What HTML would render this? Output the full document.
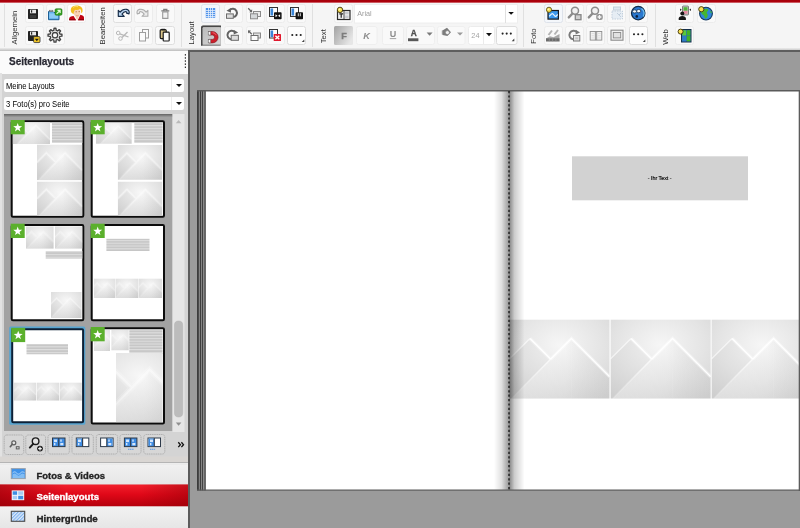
<!DOCTYPE html>
<html><head><meta charset="utf-8"><title>Fotobuch</title>
<style>
*{box-sizing:border-box;margin:0;padding:0}
html,body{width:800px;height:528px;overflow:hidden;background:#9b9b9b;font-family:"Liberation Sans",sans-serif;}
.abs{position:absolute;will-change:transform}
#topred{left:0;top:0;width:800px;height:3px;background:linear-gradient(#a6000a 0,#ad000c 62%,#e3a0a4 100%)}
#toolbar{left:0;top:3px;width:800px;height:47px;background:#f5f5f5}
#tbline{left:0;top:48px;width:800px;height:2.500px;background:linear-gradient(#ececec,#bdbdbd)}
#sidebar{left:0;top:51px;width:188px;height:477px;background:#d4d4d4}
#sbhead{left:0;top:-0.500px;width:188px;height:22.500px;background:#fbfbfb}
#sbhead span{position:absolute;left:9px;top:4.500px;font-size:10px;font-weight:bold;color:#2a2a34;letter-spacing:0;-webkit-text-stroke:0.250px #2a2a34}
.combo{position:absolute;left:4px;width:180px;height:13px;background:#fff;border-radius:2px;font-size:8.300px;line-height:15.200px;color:#000;padding-left:2px;letter-spacing:-0.100px}
.combo span{display:inline-block;transform:scaleX(0.920);transform-origin:0 50%;white-space:nowrap}
.combo:after{content:"";position:absolute;right:2.500px;top:5px;border:3px solid transparent;border-top:3.500px solid #111;border-bottom:0}
.combo:before{content:"";position:absolute;right:12px;top:0;width:1px;height:13px;background:#ececec}
#canvas{left:188px;top:50px;width:612px;height:478px;background:#9b9b9b;border-left:2.500px solid #5c5c5c;border-top:2px solid #5e5e5e}
</style></head><body>
<div id="topred" class="abs"></div>
<div id="toolbar" class="abs"></div>
<div id="tbline" class="abs"></div>
<svg class="abs" style="left:0;top:0" width="800" height="50" viewBox="0 0 800 50" font-family="Liberation Sans, sans-serif">
<defs><linearGradient id="pr" x1="0" y1="0" x2="1" y2="1"><stop offset="0" stop-color="#bcbcbc"/><stop offset="1" stop-color="#d6d6d6"/></linearGradient><linearGradient id="pr2" x1="0" y1="0" x2="1" y2="0.6"><stop offset="0" stop-color="#a2a2a2"/><stop offset="1" stop-color="#e6e6e6"/></linearGradient></defs>
<rect x="4" y="4" width="1" height="43" fill="#e0e0e0"/>
<rect x="92" y="4" width="1" height="43" fill="#e0e0e0"/>
<rect x="181" y="4" width="1" height="43" fill="#e0e0e0"/>
<rect x="312" y="4" width="1" height="43" fill="#e0e0e0"/>
<rect x="523" y="4" width="1" height="43" fill="#e0e0e0"/>
<rect x="655" y="4" width="1" height="43" fill="#e0e0e0"/>
<text transform="translate(16.9,44.5) rotate(-90)" font-size="7.700" fill="#2e2e2e">Allgemein</text>
<text transform="translate(105.2,44.5) rotate(-90)" font-size="7.700" fill="#2e2e2e">Bearbeiten</text>
<text transform="translate(193.9,44.5) rotate(-90)" font-size="7.700" fill="#2e2e2e">Layout</text>
<text transform="translate(326.1,43.3) rotate(-90)" font-size="7.700" fill="#2e2e2e">Text</text>
<text transform="translate(536.3,43.8) rotate(-90)" font-size="7.700" fill="#2e2e2e">Foto</text>
<text transform="translate(667.8,44.8) rotate(-90)" font-size="7.700" fill="#2e2e2e">Web</text>
<rect x="25.5" y="4.5" width="18" height="18" rx="2" fill="#f9f9f9" stroke="#ececec"/>
<rect x="46.5" y="4.5" width="18" height="18" rx="2" fill="#f9f9f9" stroke="#ececec"/>
<rect x="67.5" y="4.5" width="18" height="18" rx="2" fill="#f9f9f9" stroke="#ececec"/>
<rect x="25.5" y="26.5" width="18" height="18" rx="2" fill="#f9f9f9" stroke="#ececec"/>
<rect x="46.5" y="26.5" width="18" height="18" rx="2" fill="#f9f9f9" stroke="#ececec"/>
<rect x="113.5" y="4.5" width="18" height="18" rx="2" fill="#f9f9f9" stroke="#ececec"/>
<rect x="113.5" y="26.5" width="18" height="18" rx="2" fill="#f9f9f9" stroke="#ececec"/>
<rect x="134.5" y="4.5" width="18" height="18" rx="2" fill="#f9f9f9" stroke="#ececec"/>
<rect x="134.5" y="26.5" width="18" height="18" rx="2" fill="#f9f9f9" stroke="#ececec"/>
<rect x="156.5" y="4.5" width="18" height="18" rx="2" fill="#f9f9f9" stroke="#ececec"/>
<rect x="156.5" y="26.5" width="18" height="18" rx="2" fill="#f9f9f9" stroke="#ececec"/>
<rect x="201.5" y="4.5" width="18" height="18" rx="2" fill="#f9f9f9" stroke="#ececec"/>
<rect x="224.5" y="4.5" width="18" height="18" rx="2" fill="#f9f9f9" stroke="#ececec"/>
<rect x="224.5" y="26.5" width="18" height="18" rx="2" fill="#f9f9f9" stroke="#ececec"/>
<rect x="246.5" y="4.5" width="18" height="18" rx="2" fill="#f9f9f9" stroke="#ececec"/>
<rect x="246.5" y="26.5" width="18" height="18" rx="2" fill="#f9f9f9" stroke="#ececec"/>
<rect x="266.5" y="4.5" width="18" height="18" rx="2" fill="#f9f9f9" stroke="#ececec"/>
<rect x="266.5" y="26.5" width="18" height="18" rx="2" fill="#f9f9f9" stroke="#ececec"/>
<rect x="287.5" y="4.5" width="18" height="18" rx="2" fill="#f9f9f9" stroke="#ececec"/>
<rect x="287.5" y="26.5" width="18" height="18" rx="2" fill="#f9f9f9" stroke="#ececec"/>
<rect x="544.5" y="4.5" width="18" height="18" rx="2" fill="#f9f9f9" stroke="#ececec"/>
<rect x="544.5" y="26.5" width="18" height="18" rx="2" fill="#f9f9f9" stroke="#ececec"/>
<rect x="565.5" y="4.5" width="18" height="18" rx="2" fill="#f9f9f9" stroke="#ececec"/>
<rect x="565.5" y="26.5" width="18" height="18" rx="2" fill="#f9f9f9" stroke="#ececec"/>
<rect x="586.5" y="4.5" width="18" height="18" rx="2" fill="#f9f9f9" stroke="#ececec"/>
<rect x="586.5" y="26.5" width="18" height="18" rx="2" fill="#f9f9f9" stroke="#ececec"/>
<rect x="607.5" y="4.5" width="18" height="18" rx="2" fill="#f9f9f9" stroke="#ececec"/>
<rect x="607.5" y="26.5" width="18" height="18" rx="2" fill="#f9f9f9" stroke="#ececec"/>
<rect x="629.5" y="4.5" width="18" height="18" rx="2" fill="#f9f9f9" stroke="#ececec"/>
<rect x="629.5" y="26.5" width="18" height="18" rx="2" fill="#f9f9f9" stroke="#ececec"/>
<rect x="675.5" y="4.5" width="18" height="18" rx="2" fill="#f9f9f9" stroke="#ececec"/>
<rect x="697.5" y="4.5" width="18" height="18" rx="2" fill="#f9f9f9" stroke="#ececec"/>
<rect x="675.5" y="26.5" width="18" height="18" rx="2" fill="#f9f9f9" stroke="#ececec"/>
<rect x="334.5" y="4.5" width="18" height="18" rx="2" fill="#f9f9f9" stroke="#ececec"/>

<g id="i-save">
<rect x="28" y="9" width="10" height="10" rx="0.8" fill="#232323"/>
<rect x="30" y="9.7" width="6" height="3.6" fill="#e9e9e9"/>
<rect x="31" y="10.2" width="1.2" height="2.4" fill="#232323"/>
<rect x="30" y="15" width="6" height="3.2" fill="#3b3b3b"/>
</g>

<g id="i-folder">
<path d="M48.5 11.5h4.5l1 1h5v7.2h-10.5z" fill="#5fb0ea" stroke="#1d5e94" stroke-width="1"/>
<rect x="49.3" y="10.2" width="3.6" height="1.5" fill="#d9d9e6" stroke="#555" stroke-width="0.5"/>
<rect x="49.3" y="13.4" width="8.8" height="4.8" fill="#8ccbf5"/>
<rect x="55" y="8.8" width="7" height="6.4" rx="1.2" fill="#38a624" stroke="#1d6b12" stroke-width="0.6"/>
<path d="M56.6 13.8l3.2-3.2m-2.3-.3h2.6v2.6" stroke="#e8ffe0" stroke-width="1.2" fill="none"/>
</g>

<g id="i-user">
<rect x="67.500" y="4.500" width="18" height="18" rx="2" fill="#fefefe" stroke="#ececec"/>
<path d="M74.600 14.500l2.500 5.700 2.800-5.700z" fill="#f8cfb0"/>
<path d="M69.200 20.200v-2c0-1.300 1.800-1.900 4.400-2.300l2.600 4.300zM84 20.200v-2.800c0-1.400-1.600-2.200-3.600-2.600l-2.600 5.400z" fill="#c00312"/>
<path d="M69.200 20.200v-1.200h5.800l.8 1.200zM84 20.200v-1.300h-5.200l-.6 1.300z" fill="#8e000a"/>
<ellipse cx="77" cy="12.300" rx="3.300" ry="4.200" fill="#f9d2b4"/>
<path d="M71.400 12.400c-1.600-3.600.4-6.800 5-6.800 4.400 0 7 2.400 6 6.400l-1.200 1.600c.2-2-.2-3.600-1.200-4.600-1.600 1-3.400 1.200-4.800.8-1 1-1.400 2.400-1.600 4.400z" fill="#f3bd1e"/>
<path d="M73 7.500c1.400-1.200 3.400-1.400 5-.8" stroke="#fbe27a" stroke-width="0.900" fill="none"/>
<path d="M75.600 11.800h1.200M78.600 11.600h1.200" stroke="#a55a2a" stroke-width="0.800"/>
<path d="M75.800 15.300c.8.600 2 .6 2.800 0" stroke="#d98a66" stroke-width="0.700" fill="none"/>
</g>

<g id="i-saveas">
<rect x="28" y="31" width="10" height="10" rx="0.8" fill="#232323"/>
<rect x="30" y="31.700" width="6" height="3.600" fill="#e9e9e9"/>
<rect x="31" y="32.200" width="1.200" height="2.400" fill="#232323"/>
<rect x="33.600" y="36.600" width="6.400" height="6" rx="1" fill="#f0c62a" stroke="#2a2a2a" stroke-width="0.8"/>
<path d="M34.800 38.800h4l-2 2.400z" fill="#1b1b1b"/>
</g>

<g id="i-gear"><path d="M59.86 34.03 L61.94 34.27 L61.94 36.13 L59.86 36.37 L59.26 37.81 L60.56 39.45 L59.25 40.76 L57.61 39.46 L56.17 40.06 L55.93 42.14 L54.07 42.14 L53.83 40.06 L52.39 39.46 L50.75 40.76 L49.44 39.45 L50.74 37.81 L50.14 36.37 L48.06 36.13 L48.06 34.27 L50.14 34.03 L50.74 32.59 L49.44 30.95 L50.75 29.64 L52.39 30.94 L53.83 30.34 L54.07 28.26 L55.93 28.26 L56.17 30.34 L57.61 30.94 L59.25 29.64 L60.56 30.95 L59.26 32.59Z" fill="#fdfdfd" stroke="#434343" stroke-width="1.400" stroke-linejoin="round"/><circle cx="55" cy="35.2" r="2.700" fill="#fbfbfb" stroke="#434343" stroke-width="1.300"/></g>

<g id="i-undo">
<rect x="113.500" y="4.500" width="18" height="18" rx="2" fill="#f9f9f9" stroke="#dedede"/>
<path d="M118.300 16.300V10.400L120.100 12.200C121.500 10.200 124 8.800 126.800 9.400C129 9.900 129.600 11.800 129 13.900L126.600 13.200C127 12.200 126.600 11.600 125.600 11.600C124.200 11.600 122.900 12.800 122 14.100L124.200 16.300Z" fill="#b9d5f1" stroke="#172d49" stroke-width="1.200" stroke-linejoin="round"/>
</g>

<g id="i-redo">
<path d="M147.9 16.3 V10.4 L146.1 12.2 C144.7 10.2 142.2 8.8 139.4 9.4 C137.2 9.9 136.6 11.8 137.2 13.9 L139.6 13.2 C139.2 12.2 139.6 11.6 140.6 11.6 C142.0 11.6 143.3 12.8 144.2 14.1 L142.0 16.3 Z" fill="#ebebeb" stroke="#adadad" stroke-width="1.100" stroke-linejoin="round"/>
</g>

<g id="i-trash" stroke="#9a9a9a" fill="none" stroke-width="1.100">
<path d="M162.700 12h5.200v6.400h-5.200z" fill="#f3f3f3"/>
<path d="M161.300 10.800h8M163.800 10.600v-1.300h3v1.300" stroke="#7f7f7f" stroke-width="1.300"/>
</g>

<g id="i-cut" stroke="#b8b8b8" fill="none" stroke-width="1">
<circle cx="118.200" cy="33" r="1.800"/><circle cx="120.500" cy="38.500" r="1.800"/>
<path d="M119.800 33.800l8.700 3.200M122 37.500l5.500-5.500" stroke-width="1.300"/>
</g>

<g id="i-copy" stroke="#9d9d9d" fill="#fafafa" stroke-width="1">
<rect x="142.500" y="29.500" width="6" height="8.500"/>
<rect x="139.500" y="32.500" width="6" height="8.500"/>
</g>

<g id="i-paste" stroke-width="1.200">
<rect x="155.500" y="26.500" width="19" height="18" rx="2" fill="#fafafa" stroke="#dedede" stroke-width="1"/>
<rect x="160.200" y="29.600" width="6" height="9" rx="1" fill="#d9c48a" stroke="#1b1b1b"/>
<rect x="161.400" y="28.800" width="3.600" height="1.600" fill="#1b1b1b" stroke="none"/>
<rect x="163.200" y="32.200" width="6" height="8.800" rx="0.800" fill="#fdfdfd" stroke="#1b1b1b"/>
</g>

<g id="i-grid">
<rect x="201.500" y="4.500" width="18" height="18" rx="2" fill="#f3f6fb" stroke="#dfe3ea"/>
<rect x="205.800" y="8" width="9.400" height="9.800" fill="#4f92ea"/>
<g fill="#e2edfc"><rect x="208" y="8" width="0.800" height="9.800"/><rect x="210.100" y="8" width="0.800" height="9.800"/><rect x="212.200" y="8" width="0.800" height="9.800"/>
<rect x="205.800" y="10" width="9.400" height="0.800"/><rect x="205.800" y="12" width="9.400" height="0.800"/><rect x="205.800" y="14" width="9.400" height="0.800"/><rect x="205.800" y="16" width="9.400" height="0.800"/></g>
</g>

<g id="i-magnet">
<rect x="201" y="25.600" width="20" height="20.200" rx="2" fill="#bdbdbd"/>
<path d="M201 45.800v-18.200a2 2 0 0 1 2-2h18v1.700h-17.300a1 1 0 0 0-1 1v17.500z" fill="#474747"/>
<rect x="202.700" y="27.300" width="17.500" height="17.300" rx="1" fill="url(#pr)"/>
<rect x="202.700" y="44.600" width="18" height="1.200" fill="#8c8c8c"/>
<path d="M209.200 31.500h3.200a5.700 5.700 0 0 1 0 11.400h-3.200v-3.500h3.200a2.200 2.200 0 0 0 0-4.400h-3.200z" fill="#cc1f2a" stroke="#7d1119" stroke-width="0.600"/>
<path d="M212.600 32.600a4.600 4.600 0 0 1 3.800 2.600" fill="none" stroke="#ec6a70" stroke-width="0.900"/>
<rect x="208.200" y="31.500" width="2.500" height="3.500" fill="#f6f6f6" stroke="#555" stroke-width="0.500"/>
<rect x="208.200" y="39.400" width="2.500" height="3.500" fill="#f6f6f6" stroke="#555" stroke-width="0.500"/>
</g>

<g id="i-rotl" fill="none" stroke="#626262">
<path d="M229.600 10.200A4.200 4.200 0 1 1 233.400 17.100" stroke-width="2"/>
<path d="M226.500 10.700l4.300-2.700.2 4.700z" fill="#626262" stroke="none"/>
<rect x="226.500" y="13.900" width="6.800" height="4.400" fill="#dcdcdc" stroke="#6a6a6a" stroke-width="1"/>
</g>

<g id="i-rotr" fill="none" stroke="#626262">
<path d="M235 32.300A4.300 4.300 0 1 0 231.600 39.400" stroke-width="2"/>
<path d="M238.200 32.600l-4.300-2.700-.2 4.700z" fill="#626262" stroke="none"/>
<rect x="231.200" y="35.300" width="7.200" height="5" fill="#dcdcdc" stroke="#6a6a6a" stroke-width="1"/>
</g>

<g id="i-back" stroke="#8a8a8a" fill="none" stroke-width="1">
<rect x="253.500" y="11.500" width="7" height="5" fill="#eaeaea"/>
<rect x="250.500" y="13.800" width="7" height="5" fill="#d5d8da"/>
<path d="M248.200 8.300l3.400 3.400" stroke="#666" stroke-width="1.300"/>
<path d="M249.200 12.200h2.900v-2.900z" fill="#666" stroke="none"/>
</g>

<g id="i-fwd" stroke="#8a8a8a" fill="none" stroke-width="1">
<rect x="253.500" y="33" width="7" height="5" fill="#e2e2e2"/>
<rect x="251" y="35.500" width="7" height="5" fill="#fdfdfd" stroke="#6d6d6d"/>
<path d="M251.800 34.200l-3.400-3.400" stroke="#666" stroke-width="1.300"/>
<path d="M248 33.400v-3h3z" fill="#666" stroke="none"/>
</g>

<g id="i-pg1">
<rect x="269.500" y="7.500" width="8" height="9" fill="#fdfdfd" stroke="#333" stroke-width="1"/>
<rect x="270.500" y="8.500" width="2.600" height="7" fill="#3a86d8"/>
<rect x="274" y="12.300" width="7.600" height="7" rx="0.800" fill="#111"/>
<path d="M275.500 14.300l2 1.500-2 1.500zM280.100 14.300l-2 1.500 2 1.500z" fill="#fff"/>
</g>

<g id="i-pg2">
<rect x="290.500" y="7.500" width="8" height="9" fill="#fdfdfd" stroke="#333" stroke-width="1"/>
<rect x="291.500" y="8.500" width="2.600" height="7" fill="#3a86d8"/>
<rect x="295.600" y="12.300" width="7.400" height="7" rx="0.800" fill="#111"/>
<path d="M297.800 13.300h1v3h-1zM299.800 13.300h1v3h-1z" fill="#ddd"/>
</g>

<g id="i-pgx">
<rect x="269.500" y="29.500" width="8" height="8.500" fill="#fdfdfd" stroke="#333" stroke-width="1"/>
<rect x="270.500" y="30.500" width="2.600" height="6.500" fill="#3a86d8"/>
<rect x="273.700" y="34" width="7.300" height="7" rx="0.600" fill="#e0182d"/>
<path d="M275.400 35.700l3.900 3.600m0-3.600l-3.900 3.600" stroke="#fff" stroke-width="1.400"/>
</g>

<g id="i-more1">
<rect x="287.500" y="26.500" width="18" height="18" rx="2" fill="#fdfdfd" stroke="#dcdcdc"/>
<circle cx="292.300" cy="35" r="1.050" fill="#222"/><circle cx="296.500" cy="35" r="1.050" fill="#222"/><circle cx="300.700" cy="35" r="1.050" fill="#222"/>
<path d="M304.300 39.500v2.600h-2.600z" fill="#444"/>
</g>

<g id="i-tbox">
<rect x="337.500" y="10.500" width="12.500" height="9" fill="#f1f1f1" stroke="#2a2a2a" stroke-width="1.200"/>
<rect x="344.800" y="12" width="3.800" height="2.300" fill="#c9ccd2"/><rect x="344.800" y="15.500" width="3.800" height="2.500" fill="#c9ccd2"/>
<path d="M344 11v8" stroke="#2a2a2a" stroke-width="0.800"/>
<path d="M339.300 13.300h3.800v1.200h-1.300v3.300h-1.200v-3.300h-1.300z" fill="#222"/>
<circle cx="340" cy="9.900" r="2.700" fill="#f7df52" stroke="#3e3208" stroke-width="0.900"/><circle cx="339.500" cy="9.400" r="0.900" fill="#fdf6c0"/>
</g>

<g id="i-font">
<rect x="354.500" y="4.500" width="163" height="18.500" fill="#ffffff" stroke="#eeeeee"/>
<path d="M505.500 5v18" stroke="#e0e0e0"/>
<text x="357.300" y="16.200" font-size="7.200" fill="#9e9e9e">Arial</text>
<path d="M508.300 12h5.600l-2.800 2.800z" fill="#111"/>
</g>

<g id="i-F">
<rect x="334" y="26" width="19" height="19" rx="1.500" fill="url(#pr2)"/>
<text x="344" y="39" font-size="9.200" font-weight="bold" fill="#7d7d7d" stroke="#7d7d7d" stroke-width="0.300" text-anchor="middle">F</text>
</g>
<g id="i-K">
<rect x="356.500" y="26.500" width="20.500" height="18" rx="2" fill="#f9f9f9" stroke="#eeeeee"/>
<text x="366.600" y="38.500" font-size="9.300" font-weight="bold" font-style="italic" fill="#8d8d8d" text-anchor="middle">K</text>
</g>
<g id="i-U">
<rect x="382.500" y="26.500" width="21" height="18" rx="2" fill="#f9f9f9" stroke="#eeeeee"/>
<text x="393" y="37.300" font-size="9" font-weight="bold" fill="#8d8d8d" text-anchor="middle">U</text>
<path d="M389.800 38.600h6.400" stroke="#8d8d8d" stroke-width="0.800"/>
</g>
<g id="i-A">
<rect x="406.500" y="26.500" width="28" height="18" rx="2" fill="#f9f9f9" stroke="#efefef"/>
<text x="413.800" y="35.600" font-size="8.300" font-weight="bold" fill="#505050" stroke="#505050" stroke-width="0.350" text-anchor="middle">A</text>
<rect x="408" y="38.300" width="10.400" height="2.900" fill="#585858"/>
<path d="M426.600 32.500h6l-3 3.200z" fill="#7a7a7a"/>
</g>
<g id="i-fill">
<rect x="437.500" y="26.500" width="27.500" height="18" rx="2" fill="#f9f9f9" stroke="#efefef"/>
<path d="M442.500 30.500l4.500-2.800 4 4.600-3.600 3.800-4.900-1.200z" fill="#7c7c7c"/>
<circle cx="447.400" cy="32.600" r="2" fill="#f2f2f2" stroke="#777" stroke-width="0.600"/>
<path d="M442.400 30.600v3.800" stroke="#9a9a9a" stroke-width="1.200"/>
<path d="M457 32.400h6l-3 3.200z" fill="#9a9a9a"/>
</g>
<g id="i-size">
<rect x="468.500" y="26.500" width="26" height="18" rx="2" fill="#ffffff" stroke="#ececec"/>
<path d="M483.500 27v17" stroke="#ebebeb"/>
<text x="471.300" y="38" font-size="7.400" fill="#a4a4a4">24</text>
<path d="M486 33h6l-3 3.200z" fill="#111"/>
</g>
<g id="i-more2">
<rect x="496.500" y="26.500" width="20.500" height="18" rx="2" fill="#fdfdfd" stroke="#dcdcdc"/>
<circle cx="502.600" cy="33.600" r="1.050" fill="#222"/><circle cx="506.700" cy="33.600" r="1.050" fill="#222"/><circle cx="510.800" cy="33.600" r="1.050" fill="#222"/>
<path d="M514.300 38.600v2.600h-2.600z" fill="#444"/>
</g>

<g id="i-photo">
<rect x="544.500" y="4.500" width="18" height="18" rx="2" fill="#f4f7fb" stroke="#dde2ea"/>
<rect x="548" y="10.500" width="10.400" height="8.600" fill="#3b97ec" stroke="#15171c" stroke-width="1.200"/>
<path d="M549 16.200c1.300-.2 2-2.600 3.300-2.600s1.900 2.800 3.200 2.800 1.400-1.600 2.300-1.800" fill="none" stroke="#e9f4fe" stroke-width="1.200"/>
<circle cx="549" cy="9.800" r="2.600" fill="#f7df52" stroke="#4a3c0a" stroke-width="0.800"/>
<circle cx="548.500" cy="9.300" r="0.900" fill="#fdf6c0"/>
</g>

<g id="i-mag1" fill="none" stroke="#8c8c8c">
<circle cx="575" cy="10.800" r="3.500" stroke-width="1.500" fill="#f1f1f1"/>
<path d="M572.300 13.700l-3.500 3.700" stroke-width="2.400" stroke-linecap="round"/>
<rect x="575.300" y="14.700" width="5.700" height="5" fill="#cfcfcf" stroke="#858585" stroke-width="1.300"/>
</g>

<g id="i-mag2" fill="none" stroke="#8c8c8c">
<circle cx="595" cy="10.800" r="3.500" stroke-width="1.500" fill="#f1f1f1"/>
<path d="M592.300 13.700l-3.500 3.700" stroke-width="2.400" stroke-linecap="round"/>
<rect x="596.200" y="13.900" width="6.600" height="6.200" rx="2" fill="#969696" stroke="none"/>
<path d="M597.600 17h3.800M599.500 15.100v3.800" stroke="#f6f6f6" stroke-width="1.300"/>
</g>

<g id="i-crop" stroke="#c2cfdc" fill="none" stroke-width="1">
<rect x="612" y="11" width="10.500" height="8" fill="#e6edf4" stroke-dasharray="1.500 1"/>
<rect x="613.500" y="7" width="7" height="3" fill="#dfe7ef"/>
<path d="M617 13l4 4m0-4l-2 2" />
</g>

<g id="i-smile">
<circle cx="638.200" cy="13.100" r="6.700" fill="#2b78cf" stroke="#102a48" stroke-width="1.300"/>
<path d="M641.500 8.500a6 6 0 0 1 1.800 8" stroke="#6fc0f0" stroke-width="1.300" fill="none"/>
<ellipse cx="634.600" cy="11.400" rx="2.100" ry="1.600" fill="#f4f8fc" stroke="#102a48" stroke-width="0.700"/>
<ellipse cx="638.700" cy="11.100" rx="2.100" ry="1.600" fill="#f4f8fc" stroke="#102a48" stroke-width="0.700"/>
<circle cx="636.800" cy="16.400" r="1.300" fill="#0c1f3a"/>
</g>

<g id="i-hist">
<path d="M546 38.500l4-2.200 3.500 1 6-3.300v4.500z" fill="#a8a8a8"/>
<rect x="546" y="38.200" width="13.600" height="3.300" fill="#6c6c6c"/>
<path d="M549.300 38.200v3.300M552.600 38.200v3.300M555.900 38.200v3.300" stroke="#9c9c9c" stroke-width="0.600"/>
<path d="M548.500 35l3.500-4.500M554.500 34.500l3.500-4.500" stroke="#b4b4b4" stroke-width="2"/>
</g>

<g id="i-rotp" fill="none" stroke="#7a7a7a">
<path d="M577 32.300A4.300 4.300 0 1 0 573.200 39.300" stroke-width="1.900"/>
<path d="M580 32.400l-4.200-2.600-.2 4.600z" fill="#7a7a7a" stroke="none"/>
<rect x="573.500" y="35.500" width="6.300" height="5.500" fill="#e4e4e4" stroke-width="1"/>
<rect x="575.300" y="37.300" width="2.800" height="2" fill="#c4c4c4" stroke="none"/>
</g>

<g id="i-cols" fill="#f2f2f2" stroke="#8c8c8c" stroke-width="0.900">
<rect x="590.200" y="31.500" width="11.600" height="8.600"/>
<path d="M595.400 31.500v8.600M596.700 31.500v8.600"/>
<path d="M591.500 33.500h2.700M591.500 35.700h2.700M591.500 37.900h2.700M598 33.500h2.700M598 35.700h2.700M598 37.900h2.700" stroke="#d4d4d4" stroke-width="0.600"/>
</g>

<g id="i-frame" fill="none" stroke="#8a8a8a">
<rect x="611" y="30.200" width="12" height="10" fill="#f2f2f2" stroke-width="1.100"/>
<rect x="613.300" y="32.500" width="7.400" height="5.400" fill="#e2e2e2" stroke-width="0.900"/>
</g>
<g id="i-more3">
<rect x="629.500" y="26.500" width="18" height="18" rx="2" fill="#fdfdfd" stroke="#dcdcdc"/>
<circle cx="634" cy="34.300" r="1.050" fill="#222"/><circle cx="638.200" cy="34.300" r="1.050" fill="#222"/><circle cx="642.400" cy="34.300" r="1.050" fill="#222"/>
<path d="M645.300 39.500v2.500h-2.500z" fill="#444"/>
</g>

<g id="i-person">
<rect x="682.500" y="6" width="6" height="9" rx="0.800" fill="#c9c9c9" stroke="#555" stroke-width="0.700"/>
<rect x="683.500" y="7.200" width="4" height="3.600" fill="#4fb63a"/>
<rect x="683.500" y="10.800" width="4" height="3" fill="#e58aa0"/>
<path d="M680 8.500l1.800 1.200-1.800 1.200zM691 8.500l-1.800 1.200 1.800 1.200z" fill="#333"/>
<circle cx="682.300" cy="13.600" r="2" fill="#151515"/>
<path d="M678.700 20v-1.500c0-1.700 1.600-2.600 3.600-2.600s3.600.9 3.600 2.600v1.500z" fill="#151515"/>
</g>

<g id="i-globe">
<circle cx="706" cy="13.600" r="6.400" fill="#2f86d8" stroke="#143a60" stroke-width="1.100"/>
<path d="M703 9.200c2-.8 4.500-.8 5.200.4.600 1.200-1 1.600-1.400 2.800-.4 1.200 1.400 1.600 1 3-.4 1.600-1.600 3-2.600 3.200-.8-.8-.4-2.200-1.200-3.200-.8-1-2.200-.8-2.600-2.200-.4-1.400.4-3.200 1.600-4z" fill="#45b52f"/>
<path d="M710.500 10.500c.9.500 1.400 1.700 1.200 2.900l-1.400-.8z" fill="#45b52f"/>
<circle cx="701.300" cy="9.200" r="2.600" fill="#f7df52" stroke="#3e3208" stroke-width="0.900"/>
</g>

<g id="i-sq">
<rect x="681.500" y="29.500" width="9.500" height="12.500" fill="#2c6fb6" stroke="#152f4a" stroke-width="1"/>
<rect x="682.300" y="30.300" width="3.800" height="5.200" fill="#58c93a"/>
<rect x="686.700" y="30.300" width="3.700" height="5.200" fill="#3fb324"/>
<rect x="682.300" y="36.100" width="3.800" height="5.200" fill="#2f7cc7"/>
<rect x="686.700" y="36.100" width="3.700" height="5.200" fill="#3fb324"/>
<circle cx="680.600" cy="31.600" r="2.500" fill="#f7df52" stroke="#3e3208" stroke-width="0.900"/>
</g>

</svg>
<div id="canvas" class="abs"></div>
<svg class="abs" style="left:188px;top:50px" width="612" height="478" viewBox="188 50 612 478" font-family="Liberation Sans, sans-serif">
<defs>
<radialGradient id="phgc" cx="0.5" cy="0.32" r="0.8"><stop offset="0" stop-color="#f6f6f6"/><stop offset="0.55" stop-color="#e4e4e4"/><stop offset="1" stop-color="#d3d3d3"/></radialGradient>
<linearGradient id="m2gc" x1="0" y1="0" x2="1" y2="0"><stop offset="0" stop-color="#ffffff" stop-opacity="0.28"/><stop offset="0.55" stop-color="#ffffff" stop-opacity="0.06"/><stop offset="1" stop-color="#000000" stop-opacity="0.03"/></linearGradient>
<linearGradient id="lnfc" gradientUnits="userSpaceOnUse" x1="41.500" y1="40" x2="2" y2="80"><stop offset="0" stop-color="#fff" stop-opacity="0.700"/><stop offset="0.5" stop-color="#fff" stop-opacity="0.350"/><stop offset="1" stop-color="#fff" stop-opacity="0.100"/></linearGradient>
<symbol id="phc" viewBox="0 0 101 80" preserveAspectRatio="none">
<rect width="101" height="80" fill="url(#phgc)"/>
<path d="M0 40L20.800 19.300 41.500 40 2 80H0z" fill="#000" fill-opacity="0.02"/>
<path d="M2 80L62.500 19.300 101 57.800V80z" fill="url(#m2gc)"/>
<path d="M20.800 19.300L41.500 40M41.500 40.300L62.500 19.300 101 57.800" fill="none" stroke="#fff" stroke-opacity="0.350" stroke-width="3.600"/>
<path d="M20.800 19.300L41.500 40M41.500 40.300L62.500 19.300 101 57.800" fill="none" stroke="#fff" stroke-opacity="0.950" stroke-width="1.400"/>
<path d="M0 40L20.800 19.300" fill="none" stroke="#fff" stroke-opacity="0.600" stroke-width="1.400"/>
<path d="M2 80L41.500 40.300" fill="none" stroke="url(#lnfc)" stroke-width="1.500"/>
<path d="M62.500 19.300V80" stroke="#fff" stroke-opacity="0.100" stroke-width="0.800"/>
</symbol>
<linearGradient id="shl" x1="0" y1="0" x2="1" y2="0"><stop offset="0" stop-color="#000" stop-opacity="0"/><stop offset="0.5" stop-color="#000" stop-opacity="0.12"/><stop offset="1" stop-color="#000" stop-opacity="0.40"/></linearGradient>
<linearGradient id="shr" x1="0" y1="0" x2="1" y2="0"><stop offset="0" stop-color="#000" stop-opacity="0.50"/><stop offset="0.35" stop-color="#000" stop-opacity="0.20"/><stop offset="1" stop-color="#000" stop-opacity="0"/></linearGradient>
</defs>
<rect x="197" y="90" width="610" height="400.500" fill="#ffffff"/>
<rect x="197" y="90.500" width="1" height="400" fill="#3c3c3c"/>
<rect x="198" y="90.500" width="1" height="400" fill="#4a4a4a"/>
<rect x="199" y="90.500" width="1" height="400" fill="#828282"/>
<rect x="200" y="90.500" width="1" height="400" fill="#3e3e3e"/>
<rect x="201" y="90.500" width="1" height="400" fill="#858585"/>
<rect x="202" y="90.500" width="1" height="400" fill="#424242"/>
<rect x="203" y="90.500" width="1" height="400" fill="#8a8a8a"/>
<rect x="204" y="90.500" width="1" height="400" fill="#646464"/>
<rect x="205" y="90.500" width="1" height="400" fill="#6a6a6a"/>
<use href="#phc" x="509.3" y="319.400" width="100.400" height="79.300"/>
<use href="#phc" x="610.4" y="319.400" width="100.400" height="79.300"/>
<use href="#phc" x="711.4" y="319.400" width="100.400" height="79.300"/>
<rect x="572" y="156.300" width="176" height="44" fill="#d2d2d2"/>
<text x="659.700" y="180.200" font-size="5.300" text-anchor="middle" fill="#000" stroke="#000" stroke-width="0.150">- Ihr Text -</text>
<rect x="494" y="91" width="15" height="399" fill="url(#shl)"/>
<rect x="509" y="91" width="15.500" height="399" fill="url(#shr)"/>
<rect x="197" y="90" width="610" height="1.500" fill="#5a5a5a"/>
<rect x="197" y="489.500" width="610" height="1.300" fill="#5a5a5a"/>
<rect x="798.700" y="90" width="1.300" height="401" fill="#5c5c5c"/>
<path d="M509 91V491" stroke="#0a0a0a" stroke-width="1.250" stroke-dasharray="2.200 2.200"/>
</svg>
<div id="sidebar" class="abs">
  <div id="sbhead" class="abs"><span>Seitenlayouts</span></div>
  <div class="abs" style="left:0;top:22px;width:2px;height:390px;background:#e2e2e2"></div>
  <div class="combo" style="top:28px"><span>Meine Layouts</span></div>
  <div class="combo" style="top:46px"><span style="letter-spacing:0.020px">3 Foto(s) pro Seite</span></div>
<svg class="abs" style="left:0;top:-51px" width="188" height="528" viewBox="0 0 188 528" font-family="Liberation Sans, sans-serif">
<defs>
<radialGradient id="phg" cx="0.5" cy="0.32" r="0.8"><stop offset="0" stop-color="#f7f7f7"/><stop offset="0.55" stop-color="#e3e3e3"/><stop offset="1" stop-color="#d2d2d2"/></radialGradient>
<linearGradient id="m2g" x1="0" y1="0" x2="1" y2="0"><stop offset="0" stop-color="#ffffff" stop-opacity="0.25"/><stop offset="0.55" stop-color="#ffffff" stop-opacity="0.05"/><stop offset="1" stop-color="#000000" stop-opacity="0.04"/></linearGradient>
<linearGradient id="lnf" gradientUnits="userSpaceOnUse" x1="0" y1="19" x2="0" y2="80"><stop offset="0" stop-color="#fff" stop-opacity="1"/><stop offset="0.45" stop-color="#fff" stop-opacity="0.800"/><stop offset="1" stop-color="#fff" stop-opacity="0.100"/></linearGradient>
<symbol id="ph" viewBox="0 0 101 80" preserveAspectRatio="xMidYMid slice">
<rect width="101" height="80" fill="url(#phg)"/>
<path d="M0 40L20.800 19.300 41.500 40 2 80H0z" fill="#000" fill-opacity="0.025"/>
<path d="M2 80L62.500 19.300 101 57.800V80z" fill="url(#m2g)"/>
<path d="M0 40L20.800 19.300 41.500 40M2 80L62.500 19.300 101 57.800" fill="none" stroke="url(#lnf)" stroke-opacity="0.220" stroke-width="7"/>
<path d="M0 40L20.800 19.300 41.500 40M2 80L62.500 19.300 101 57.800" fill="none" stroke="url(#lnf)" stroke-opacity="0.450" stroke-width="2.800"/>
</symbol>
<symbol id="phs" viewBox="0 0 101 80" preserveAspectRatio="xMidYMid slice">
<rect width="101" height="80" fill="url(#phg)"/>
<path d="M2 80L62.500 19.300 101 57.800V80z" fill="url(#m2g)"/>
<path d="M0 40L20.800 19.300 41.500 40M2 80L62.500 19.300 101 57.800" fill="none" stroke="url(#lnf)" stroke-opacity="0.220" stroke-width="9"/>
<path d="M0 40L20.800 19.300 41.500 40M2 80L62.500 19.300 101 57.800" fill="none" stroke="url(#lnf)" stroke-opacity="0.250" stroke-width="3.500"/>
</symbol>
<pattern id="stripes" width="4" height="2.800" patternUnits="userSpaceOnUse"><rect width="4" height="2.800" fill="#dedede"/><rect width="4" height="1.500" y="0.300" fill="#c4c4c4"/></pattern>
<linearGradient id="tsh" x1="0" y1="0" x2="0" y2="1"><stop offset="0" stop-color="#6e6e6e"/><stop offset="1" stop-color="#a2a2a2"/></linearGradient>
</defs>
<rect x="4" y="114" width="168.500" height="317" fill="#a2a2a2"/>
<rect x="4" y="114" width="168.500" height="1" fill="#6c6c6c"/><rect x="4" y="115" width="168.500" height="1" fill="#808080"/><rect x="4" y="116" width="168.500" height="1" fill="#949494"/>
<rect x="172.500" y="114" width="12" height="318" fill="#e6e6e6"/>
<rect x="174.500" y="321" width="8.200" height="96" rx="4.100" fill="#bcbcbc" stroke="#b0b0b0" stroke-width="0.500"/>
<path d="M175.800 123.200h5.600l-2.800-3.200z" fill="#b9b9b9"/>
<path d="M175.800 422.500h5.600l-2.800 3.200z" fill="#8f8f8f"/>
<rect x="11.7" y="121.3" width="71.6" height="95.4" rx="1.200" fill="#ffffff" stroke="#0c0c0c" stroke-width="2"/><use href="#ph" x="12.7" y="122.3" width="37.3" height="21.7"/><rect x="52.0" y="123.0" width="30.3" height="20.0" fill="url(#stripes)"/><use href="#ph" x="37.0" y="144.6" width="45.3" height="35.7"/><use href="#ph" x="37.0" y="181.8" width="45.3" height="33.9"/><rect x="10.7" y="120.0" width="14" height="14.300" fill="#5bb02c"/><polygon points="17.70,122.90 18.82,126.06 22.17,126.15 19.51,128.19 20.46,131.40 17.70,129.50 14.94,131.40 15.89,128.19 13.23,126.15 16.58,126.06" fill="#fff"/>
<rect x="91.7" y="121.3" width="72.3" height="95.4" rx="1.200" fill="#ffffff" stroke="#0c0c0c" stroke-width="2"/><use href="#ph" x="96.0" y="123.0" width="35.8" height="20.7"/><rect x="134.3" y="123.0" width="28.3" height="20.0" fill="url(#stripes)"/><use href="#ph" x="117.7" y="145.0" width="44.6" height="34.7"/><use href="#ph" x="117.7" y="181.8" width="44.6" height="33.9"/><rect x="90.7" y="120.0" width="14" height="14.300" fill="#5bb02c"/><polygon points="97.70,122.90 98.82,126.06 102.17,126.15 99.51,128.19 100.46,131.40 97.70,129.50 94.94,131.40 95.89,128.19 93.23,126.15 96.58,126.06" fill="#fff"/>
<rect x="11.7" y="225" width="71.6" height="95.3" rx="1.200" fill="#ffffff" stroke="#0c0c0c" stroke-width="2"/><use href="#phs" x="26.0" y="226.3" width="27.6" height="22.5"/><use href="#phs" x="55.0" y="226.3" width="27.3" height="22.5"/><rect x="45.7" y="251.0" width="36.6" height="7.6" fill="url(#stripes)"/><use href="#ph" x="51.0" y="292.0" width="30.5" height="26.0"/><rect x="10.7" y="223.7" width="14" height="14.300" fill="#5bb02c"/><polygon points="17.70,226.60 18.82,229.76 22.17,229.85 19.51,231.89 20.46,235.10 17.70,233.20 14.94,235.10 15.89,231.89 13.23,229.85 16.58,229.76" fill="#fff"/>
<rect x="91.7" y="225" width="72.3" height="95.3" rx="1.200" fill="#ffffff" stroke="#0c0c0c" stroke-width="2"/><rect x="106.4" y="238.8" width="43.1" height="12.2" fill="url(#stripes)"/><use href="#phs" x="94.0" y="278.4" width="21.0" height="19.6"/><use href="#phs" x="115.5" y="278.4" width="22.5" height="19.6"/><use href="#phs" x="138.5" y="278.4" width="23.5" height="19.6"/><rect x="90.7" y="223.7" width="14" height="14.300" fill="#5bb02c"/><polygon points="97.70,226.60 98.82,229.76 102.17,229.85 99.51,231.89 100.46,235.10 97.70,233.20 94.94,235.10 95.89,231.89 93.23,229.85 96.58,229.76" fill="#fff"/>
<rect x="9.200" y="326.500" width="76.100" height="98.300" rx="1.500" fill="#58a6d2"/><rect x="12.200" y="329.300" width="70.900" height="92.900" rx="1" fill="#ffffff" stroke="#0d2036" stroke-width="2"/><rect x="26.5" y="344.0" width="41.5" height="10.3" fill="url(#stripes)"/><use href="#phs" x="14.0" y="382.4" width="22.3" height="18.3"/><use href="#phs" x="36.8" y="382.4" width="22.4" height="18.3"/><use href="#phs" x="59.7" y="382.4" width="22.1" height="18.3"/><rect x="11.2" y="327.8" width="14" height="14.300" fill="#5bb02c"/><polygon points="18.20,330.70 19.32,333.86 22.67,333.95 20.01,335.99 20.96,339.20 18.20,337.30 15.44,339.20 16.39,335.99 13.73,333.95 17.08,333.86" fill="#fff"/>
<rect x="91.7" y="328.3" width="72.3" height="95.2" rx="1.200" fill="#ffffff" stroke="#0c0c0c" stroke-width="2"/><use href="#phs" x="94.0" y="330.0" width="16.0" height="21.0"/><use href="#phs" x="111.4" y="330.0" width="17.3" height="20.5"/><rect x="129.3" y="330.0" width="33.2" height="24.0" fill="url(#stripes)"/><use href="#ph" x="116.0" y="353.0" width="46.5" height="69.3"/><rect x="90.7" y="327.0" width="14" height="14.300" fill="#5bb02c"/><polygon points="97.70,329.90 98.82,333.06 102.17,333.15 99.51,335.19 100.46,338.40 97.70,336.50 94.94,338.40 95.89,335.19 93.23,333.15 96.58,333.06" fill="#fff"/>
<defs>
<linearGradient id="redv" x1="0" y1="0" x2="0" y2="1"><stop offset="0" stop-color="#f2202c"/><stop offset="0.45" stop-color="#e00818"/><stop offset="1" stop-color="#b4000c"/></linearGradient>
<linearGradient id="redh" x1="0" y1="0" x2="1" y2="0"><stop offset="0" stop-color="#900008" stop-opacity="0.55"/><stop offset="0.35" stop-color="#900008" stop-opacity="0"/><stop offset="0.75" stop-color="#900008" stop-opacity="0"/><stop offset="1" stop-color="#900008" stop-opacity="0.45"/></linearGradient>
<linearGradient id="navg" x1="0" y1="0" x2="0" y2="1"><stop offset="0" stop-color="#f1f1f1"/><stop offset="1" stop-color="#e6e6e6"/></linearGradient>
<pattern id="hatch" width="2.400" height="2.400" patternUnits="userSpaceOnUse" patternTransform="rotate(-45)"><rect width="2.400" height="2.400" fill="#dbe9fa"/><rect width="2.400" height="1.100" fill="#7fb2ee"/></pattern>
</defs>
<!-- mini toolbar buttons -->
<g fill="#d7d7d7" stroke="#adadad" stroke-dasharray="1.200 0.600">
<rect x="4.200" y="435" width="19.500" height="19.500" rx="2.500"/>
<rect x="25.800" y="435" width="19.700" height="19.500" rx="2.500"/>
<rect x="48" y="434.500" width="21.300" height="19.500" rx="2.500"/>
<rect x="72" y="434.500" width="21.300" height="19.500" rx="2.500"/>
<rect x="96.300" y="434.500" width="21.300" height="19.500" rx="2.500"/>
<rect x="120" y="434.500" width="21" height="19.500" rx="2.500"/>
<rect x="143.800" y="434.500" width="21" height="19.500" rx="2.500"/>
</g>
<!-- small magnifier -->
<g fill="none" stroke="#5e5e5e">
<circle cx="13.800" cy="442.800" r="2" stroke-width="1.200" fill="#e6e6e6"/>
<path d="M12.300 444.300l-2 2.400" stroke-width="1.600" stroke-linecap="round"/>
<rect x="16.300" y="446.700" width="2.800" height="2.200" stroke-width="1"/>
</g>
<!-- big magnifier plus -->
<g fill="none" stroke="#1c1c1c">
<circle cx="35.600" cy="441.200" r="3.300" stroke-width="1.400" fill="#e2e2e2"/>
<path d="M33.200 443.800l-3.400 3.800" stroke-width="1.900" stroke-linecap="round"/>
<circle cx="40" cy="448.600" r="2.900" fill="#1c1c1c" stroke="none"/>
<path d="M38.200 448.600h3.600M40 446.800v3.600" stroke="#f4f4f4" stroke-width="1.200"/>
</g>
<!-- page icons -->
<g stroke="#2d3a4a" stroke-width="1">
<rect x="52.500" y="438" width="12.500" height="8.600" fill="#3f8de4"/>
<rect x="76.300" y="438" width="12.500" height="8.600" fill="#ffffff"/>
<rect x="76.800" y="438.500" width="5.800" height="7.600" fill="#3f8de4" stroke="none"/>
<rect x="100.600" y="438" width="12.500" height="8.600" fill="#ffffff"/>
<rect x="106.800" y="438.500" width="5.800" height="7.600" fill="#3f8de4" stroke="none"/>
<rect x="124.400" y="438" width="12.500" height="8.600" fill="#3f8de4"/>
<rect x="148" y="438" width="12.500" height="8.600" fill="#ffffff"/>
<rect x="148.500" y="438.500" width="5.800" height="7.600" fill="#3f8de4" stroke="none"/>
<path d="M58.750 438v8.600M82.600 438v8.600M106.800 438v8.600M130.650 438v8.600M154.300 438v8.600" stroke-width="1.100"/>
</g>
<g fill="#d4e6fb">
<rect x="54" y="439.500" width="3" height="2.600"/><rect x="54" y="443" width="1.400" height="2.300"/>
<rect x="60.300" y="443" width="3" height="2.300"/><rect x="60.300" y="439.500" width="1.400" height="2.200"/>
<rect x="78" y="439.500" width="3" height="2.600"/><rect x="78" y="443" width="1.400" height="2.300"/>
<rect x="108.300" y="443" width="3" height="2.300"/><rect x="108.300" y="439.500" width="1.400" height="2.200"/>
<rect x="126" y="439.500" width="3" height="2.600"/><rect x="126" y="443" width="1.400" height="2.300"/>
<rect x="132.300" y="443" width="3" height="2.300"/><rect x="132.300" y="439.500" width="1.400" height="2.200"/>
<rect x="150" y="439.500" width="3" height="2.600"/><rect x="150" y="443" width="1.400" height="2.300"/>
</g>
<path d="M128 449.300h6M150 449.300h5.500" stroke="#5a9be8" stroke-width="1.100" stroke-dasharray="1.300 0.500"/>
<path d="M178.300 442.300l2.100 2.400-2.100 2.400M181.400 442.300l2.100 2.400-2.100 2.400" stroke="#111" stroke-width="1.300" fill="none"/>
<!-- nav -->
<rect x="0" y="456.500" width="188" height="5.500" fill="#d9d6d3"/><rect x="0" y="462" width="188" height="1.200" fill="#b5b5b5"/>
<rect x="0" y="463.200" width="188" height="1.300" fill="#f6f6f6"/>
<rect x="0" y="464.500" width="188" height="20" fill="url(#navg)"/>
<rect x="0" y="484.500" width="188" height="22" fill="url(#redv)"/>
<rect x="0" y="484.500" width="188" height="22" fill="url(#redh)"/>
<rect x="0" y="506.500" width="188" height="1.300" fill="#fafafa"/>
<rect x="0" y="507.800" width="188" height="20.200" fill="url(#navg)"/>
<g font-size="9.500" font-weight="bold" stroke-width="0.350" stroke-linejoin="round">
<text x="36.500" y="478.700" fill="#242424" stroke="#242424" textLength="68.500" lengthAdjust="spacingAndGlyphs">Fotos &amp; Videos</text>
<text x="36.500" y="500.100" fill="#ffffff" stroke="#ffffff" textLength="62.500" lengthAdjust="spacingAndGlyphs">Seitenlayouts</text>
<text x="36.500" y="521.700" fill="#242424" stroke="#242424" textLength="61.300" lengthAdjust="spacingAndGlyphs">Hintergründe</text>
</g>
<!-- nav icons -->
<rect x="11.300" y="468.600" width="14" height="10" fill="#3d92ea" stroke="#9aa3ad" stroke-width="1"/>
<path d="M12.500 474.500c1.500-1.500 2.800-1.500 4 0s2.800 1.500 4 0 2.600-1.300 4-.3v3.800h-12z" fill="#9fd0f8" fill-opacity="0.700"/>
<path d="M12.500 473c1.500-1.500 2.800-1.500 4 0s2.800 1.500 4 0 2.600-1.300 4-.3" fill="none" stroke="#e4f2fd" stroke-width="0.700"/>
<rect x="11.700" y="490.400" width="12.500" height="9.800" fill="#f3f7fc"/>
<rect x="12.700" y="491.300" width="4.400" height="3.500" fill="#3e8de2"/><rect x="18.200" y="491.300" width="5" height="3.500" fill="#a8ccf3"/>
<rect x="12.700" y="495.800" width="4.400" height="3.500" fill="#a8ccf3"/><rect x="18.200" y="495.800" width="5" height="3.500" fill="#3e8de2"/>
<rect x="11.300" y="511.300" width="13.400" height="10" fill="url(#hatch)" stroke="#4c4c4c" stroke-width="1.100"/>

<g id="grip" fill="#1a1a1a"><rect x="184.800" y="54.2" width="1.200" height="1.300"/><rect x="184.800" y="57.3" width="1.200" height="1.300"/><rect x="184.800" y="60.4" width="1.200" height="1.300"/><rect x="184.800" y="63.5" width="1.200" height="1.300"/><rect x="184.800" y="66.6" width="1.200" height="1.300"/></g>

</svg>
</div>
</body></html>
